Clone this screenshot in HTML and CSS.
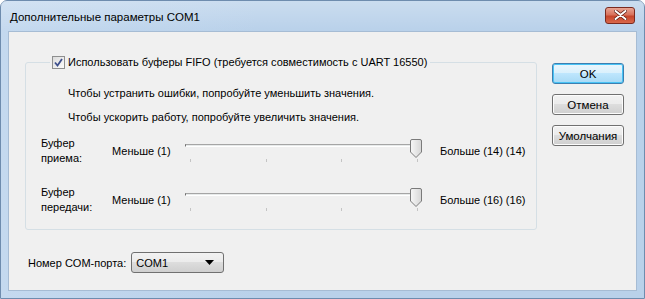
FILE: index.html
```html
<!DOCTYPE html>
<html lang="ru">
<head>
    <meta charset="utf-8">
    <title>Дополнительные параметры COM1</title>
    <link rel="stylesheet" href="styles.css">
</head>
<body>

<div class="window">
    <div class="titlebar">
        <span class="title">Дополнительные параметры COM1</span>
        <span class="close">
            <svg width="13" height="10" viewBox="0 0 13 10">
                <path d="M1.5 1 L11.5 9 M11.5 1 L1.5 9" stroke="#5a1a12" stroke-width="3.4" stroke-linecap="round"/>
                <path d="M1.5 1 L11.5 9 M11.5 1 L1.5 9" stroke="#fff" stroke-width="2" stroke-linecap="round"/>
            </svg>
        </span>
    </div>

    <div class="client">
        <div class="main">
            <fieldset class="group">
                <legend>
                    <label class="fifo">
                        <span class="check">
                            <svg width="9" height="9" viewBox="0 0 9 9">
                                <path d="M1 4.5 L3.5 7.5 L8 1" fill="none" stroke="#3d4f8c" stroke-width="1.8"/>
                            </svg>
                        </span>
                        Использовать буферы FIFO (требуется совместимость с UART 16550)
                    </label>
                </legend>

                <p class="hint first">Чтобы устранить ошибки, попробуйте уменьшить значения.</p>
                <p class="hint">Чтобы ускорить работу, попробуйте увеличить значения.</p>

                <div class="slider-row">
                    <div class="row-label">Буфер<br>приема:</div>
                    <div class="min">Меньше (1)</div>
                    <div class="slider">
                        <div class="track"></div>
                        <div class="ticks"><i></i><i></i><i></i><i></i></div>
                        <svg class="thumb" width="12" height="20" viewBox="0 0 12 20">
                            <defs>
                                <linearGradient id="thumbFill" x1="0" y1="0" x2="1" y2="0">
                                    <stop offset="0" stop-color="#f7f7f7"/>
                                    <stop offset="1" stop-color="#d6d6d6"/>
                                </linearGradient>
                            </defs>
                            <path d="M2 0.5 H10 Q11.5 0.5 11.5 2 V13 L6 18.5 L0.5 13 V2 Q0.5 0.5 2 0.5 Z" fill="url(#thumbFill)" stroke="#7a7a7a"/>
                        </svg>
                    </div>
                    <div class="max">Больше (14) (14)</div>
                </div>

                <div class="slider-row second">
                    <div class="row-label">Буфер<br>передачи:</div>
                    <div class="min">Меньше (1)</div>
                    <div class="slider">
                        <div class="track"></div>
                        <div class="ticks"><i></i><i></i><i></i><i></i></div>
                        <svg class="thumb" width="12" height="20" viewBox="0 0 12 20">
                            <path d="M2 0.5 H10 Q11.5 0.5 11.5 2 V13 L6 18.5 L0.5 13 V2 Q0.5 0.5 2 0.5 Z" fill="url(#thumbFill)" stroke="#7a7a7a"/>
                        </svg>
                    </div>
                    <div class="max">Больше (16) (16)</div>
                </div>
            </fieldset>

            <div class="port">
                <span>Номер COM-порта:</span>
                <div class="combo">
                    <span>COM1</span>
                    <svg width="9" height="5" viewBox="0 0 9 5"><path d="M0 0 H9 L4.5 5 Z" fill="#000"/></svg>
                </div>
            </div>
        </div>

        <div class="buttons">
            <button class="btn default">OK</button>
            <button class="btn">Отмена</button>
            <button class="btn">Умолчания</button>
        </div>
    </div>
</div>

</body>
</html>
```

FILE: styles.css
```css
* {
    box-sizing: border-box;
}

body {
    margin: 0;
    font-family: "Liberation Sans", Arial, sans-serif;
    font-size: 11px;
    color: #000;
    background: #fff;
}

.window {
    width: 645px;
    height: 299px;
    border: 1px solid #6e8cae;
    border-radius: 7px 7px 0 0;
    background: linear-gradient(90deg, #c4d9ef 0, #b9d1ea 40%, #b9d1ea 100%);
    display: flex;
    flex-direction: column;
}

.titlebar {
    height: 30px;
    display: flex;
    align-items: center;
    justify-content: space-between;
    padding: 0 9px 0 9px;
    background: linear-gradient(rgba(255, 255, 255, 0.25), rgba(255, 255, 255, 0));
}

.title {
    margin-top: 2px;
    font-size: 11.5px;
}

.close {
    width: 30px;
    height: 17px;
    margin-top: -2px;
    border: 1px solid #7a2a1f;
    border-radius: 3px;
    background: linear-gradient(#e8a493 0, #d8725c 45%, #c6452b 55%, #d9684a 100%);
    display: flex;
    align-items: center;
    justify-content: center;
}

.client {
    margin: 0 7px 7px 7px;
    flex: 1;
    background: #f0f0f0;
    border: 1px solid #a6bcd4;
    display: flex;
}

.main {
    padding: 22px 0 0 16px;
}

.group {
    width: 512px;
    margin: 0;
    padding: 0 0 14px 15px;
    border: 1px solid #d5dfe5;
    border-radius: 3px;
}

.group legend {
    margin-left: 9px;
    padding: 0 3px 0 2px;
    line-height: 16px;
}

.fifo {
    display: flex;
    align-items: center;
}

.check {
    width: 13px;
    height: 13px;
    margin-right: 3px;
    border: 1px solid #8e8f8f;
    background: linear-gradient(135deg, #dcdcdc, #fbfbfb);
    display: flex;
    align-items: center;
    justify-content: center;
}

.hint {
    margin: 8px 0 0 27px;
    line-height: 16px;
}

.hint.first {
    margin-top: 15px;
}

.slider-row {
    display: grid;
    grid-template-columns: 71px 72px 256px auto;
    margin-top: 11px;
}

.slider-row.second {
    margin-top: 19px;
}

.row-label {
    line-height: 15px;
}

.min, .max {
    align-self: center;
}

.slider {
    position: relative;
    height: 28px;
    margin-top: 1px;
}

.track {
    margin: 7px 0 0 1px;
    width: 235px;
    height: 3px;
    border-top: 1px solid #a5a5a5;
    border-left: 1px solid #6f6f6f;
    border-bottom: 1px solid #fff;
    background: #e7eaea;
}

.ticks {
    display: flex;
    justify-content: space-between;
    width: 228px;
    margin: 12px 0 0 6px;
}

.ticks i {
    width: 1px;
    height: 3px;
    background: #c4c4c4;
}

.thumb {
    position: absolute;
    left: 226px;
    top: 2px;
    display: block;
}

.port {
    display: flex;
    align-items: center;
    margin: 22px 0 0 3px;
}

.port span {
    margin-right: 5px;
}

.combo {
    width: 93px;
    height: 21px;
    border: 1px solid #707070;
    border-radius: 3px;
    background: linear-gradient(#f2f2f2 0, #ebebeb 50%, #dddddd 50%, #cfcfcf 100%);
    display: flex;
    align-items: center;
    justify-content: space-between;
    padding: 0 9px 0 4px;
}

.combo span {
    margin: 0;
}

.buttons {
    padding: 31px 0 0 15px;
    display: flex;
    flex-direction: column;
    gap: 10px;
}

.btn {
    width: 72px;
    height: 21px;
    padding: 0;
    font-family: inherit;
    font-size: 11.5px;
    color: #000;
    border: 1px solid #707070;
    border-radius: 3px;
    background: linear-gradient(#f2f2f2 0, #ebebeb 50%, #dddddd 50%, #cfcfcf 100%);
    box-shadow: inset 0 0 0 1px #fcfcfc;
}

.btn.default {
    border-color: #3c7fb1;
    background: linear-gradient(#eaf6fd 0, #d9f0fc 50%, #bee6fd 50%, #a7d9f5 100%);
    box-shadow: inset 0 0 0 1px #48c3f5;
}
```
